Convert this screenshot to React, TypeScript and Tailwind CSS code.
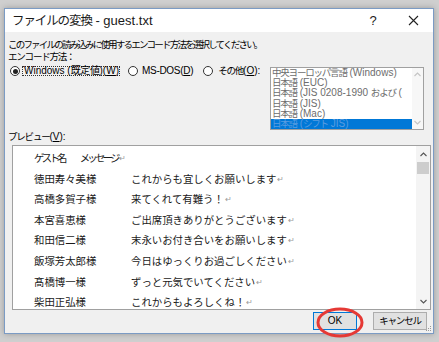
import type { ReactNode } from 'react';

const encodings = [
  '中央ヨーロッパ言語 (Windows)',
  '日本語 (EUC)',
  '日本語 (JIS 0208-1990 および (',
  '日本語 (JIS)',
  '日本語 (Mac)',
  '日本語 (シフト JIS)',
];

const guests = [
  { name: '徳田寿々美様', message: 'これからも宜しくお願いします' },
  { name: '高橋多賀子様', message: '来てくれて有難う！' },
  { name: '本宮喜恵様', message: 'ご出席頂きありがとうございます' },
  { name: '和田信二様', message: '末永いお付き合いをお願いします' },
  { name: '飯塚芳太郎様', message: '今日はゆっくりお過ごしください' },
  { name: '髙橋博一様', message: 'ずっと元気でいてください' },
  { name: '柴田正弘様', message: 'これからもよろしくね！' },
];

// Japanese runs are set a bit tighter so they take the width of the UI font
function Jp({ text, cjk = 'text-[9.5px] tracking-[-1.2px]' }: { text: string; cjk?: string }) {
  const parts = text.split(/([\u3000-\u30ff\u4e00-\u9fff\uff01-\uff60]+)/);
  return (
    <>
      {parts.map((p, i) =>
        i % 2 ? (
          <span key={i} className={cjk}>
            {p}
          </span>
        ) : (
          p
        )
      )}
    </>
  );
}

function Chevron({ up, color = '#444' }: { up?: boolean; color?: string }) {
  return (
    <svg width="7" height="5" viewBox="0 0 7 5">
      <polyline
        points={up ? '0.5,4 3.5,1 6.5,4' : '0.5,1 3.5,4 6.5,1'}
        fill="none"
        stroke={color}
        strokeWidth="1.1"
      />
    </svg>
  );
}

function Radio({ checked, children }: { checked?: boolean; children: ReactNode }) {
  return (
    <div className="flex items-center shrink-0">
      <div className="w-[10px] h-[10px] rounded-full border border-[#333] bg-white flex items-center justify-center shrink-0">
        {checked && <div className="w-[5px] h-[5px] rounded-full bg-[#222]" />}
      </div>
      {children}
    </div>
  );
}

function ReturnMark() {
  return <span className="text-[#9a9a9a] text-[8px] tracking-normal ml-[1px] align-top">↵</span>;
}

export default function App() {
  return (
    <div className="w-[439px] h-[342px] bg-[#cfcfcf] pt-[8px] pl-[4px] text-black text-[10px] font-['Liberation_Sans','Noto_Sans_CJK_JP',sans-serif]">
      <div className="relative w-[430px] h-[326px] border border-[#7b9bc4] flex flex-col shadow-[0_0_6px_rgba(0,0,0,0.25)]">
        {/* title bar */}
        <div className="h-[23px] bg-white flex items-center pl-[7px]">
          <span className="text-[13px] leading-none text-[#1a1a1a] whitespace-nowrap">
            <Jp text="ファイルの変換 - guest.txt" cjk="text-[12.5px] tracking-[-1.1px]" />
          </span>
          <div className="ml-auto flex">
            <div className="w-[40px] flex justify-center text-[13px] leading-none text-[#222]">?</div>
            <div className="w-[40px] flex justify-center items-center">
              <svg width="11" height="11" viewBox="0 0 11 11">
                <path d="M1 1L10 10M10 1L1 10" stroke="#222" strokeWidth="1.1" />
              </svg>
            </div>
          </div>
        </div>

        {/* body */}
        <div className="flex-1 bg-[#f0f0f0] flex flex-col pl-[3px]">
          <div className="mt-[7px] leading-[12px] whitespace-nowrap">
            <Jp
              text="このファイルの読み込みに使用するエンコード方法を選択してください。"
              cjk="text-[9.5px] tracking-[-1.8px]"
            />
          </div>
          <div className="leading-[12px]">
            <Jp text="エンコード方法：" />
          </div>

          <div className="mt-[2px] flex items-start">
            <div className="h-[12px] flex items-center ml-[2px]">
              <Radio checked>
                <div className="ml-[2px] w-[98px] h-[10px] border border-dotted border-[#333] flex items-center px-[1px] leading-none whitespace-nowrap">
                  Windows (<Jp text="既定値" cjk="text-[10px] tracking-[-0.4px]" />)(<u>W</u>)
                </div>
              </Radio>
              <div className="ml-[8px]">
                <Radio>
                  <span className="ml-[4px] leading-none whitespace-nowrap tracking-[-0.3px]">
                    MS-DOS(<u>D</u>)
                  </span>
                </Radio>
              </div>
              <div className="ml-[10px]">
                <Radio>
                  <span className="ml-[5px] leading-none whitespace-nowrap">
                    <Jp text="その他" />(<u>O</u>):
                  </span>
                </Radio>
              </div>
            </div>

            {/* encoding list */}
            <div className="ml-auto mr-[9px] mt-[2px] shrink-0 w-[154px] h-[63px] border border-[#a0a0a0] bg-white flex">
              <div className="flex-1 overflow-hidden leading-[10.2px] text-[#6d6d6d]">
                {encodings.map((e, i) => (
                  <div
                    key={e}
                    className={
                      i === encodings.length - 1
                        ? 'bg-[#0078d7] text-[#5a9ce0] whitespace-nowrap h-[10.2px] pl-[1px]'
                        : 'whitespace-nowrap h-[10.2px] pl-[1px]'
                    }
                  >
                    <Jp text={e} />
                  </div>
                ))}
              </div>
              <div className="w-[11px] bg-[#f7f7f7] flex flex-col items-center justify-between py-[4px]">
                <Chevron up color="#c4c4c4" />
                <Chevron color="#c4c4c4" />
              </div>
            </div>
          </div>

          <div className="mt-[1px] leading-[12px]">
            <Jp text="プレビュー" />(<u>V</u>):
          </div>

          {/* preview */}
          <div className="mt-[2px] ml-[4px] w-[419px] h-[165px] border border-[#a0a0a0] bg-white flex">
            <div className="flex-1 overflow-hidden pt-[2px] pl-[21px] text-[10.4px] leading-[20.6px] text-[#1a1a1a] font-['Noto_Sans_CJK_JP',sans-serif]">
              <div className="whitespace-nowrap">
                <span className="tracking-[-2.7px]">ゲスト名</span>
                <span className="ml-[15px] tracking-[-2.8px]">メッセージ</span>
                <ReturnMark />
              </div>
              {guests.map((g) => (
                <div key={g.name} className="flex whitespace-nowrap">
                  <span className="w-[97px]">{g.name}</span>
                  <span>
                    {g.message}
                    <ReturnMark />
                  </span>
                </div>
              ))}
            </div>
            <div className="w-[14px] bg-[#f4f4f4] flex flex-col items-center">
              <div className="h-[16px] flex items-center">
                <Chevron up color="#555" />
              </div>
              <div className="w-[12px] h-[12px] bg-[#cdcdcd]" />
              <div className="mt-auto h-[16px] flex items-center">
                <Chevron color="#555" />
              </div>
            </div>
          </div>

          {/* buttons */}
          <div className="mt-[2px] flex justify-end mr-[6px] gap-[16px]">
            <div className="relative">
              <div className="w-[44px] h-[18px] border border-[#0078d7] bg-[#e1e1e1] flex items-center justify-center leading-none">
                OK
              </div>
              <svg
                className="absolute left-[3px] top-[-5px]"
                width="48"
                height="31"
                viewBox="0 0 48 31"
              >
                <ellipse cx="24" cy="15.5" rx="22" ry="13.5" fill="none" stroke="#e53935" strokeWidth="3" />
              </svg>
            </div>
            <div className="w-[54px] h-[18px] border border-[#adadad] bg-[#e1e1e1] flex items-center justify-center leading-none">
              <Jp text="キャンセル" />
            </div>
          </div>
        </div>

        {/* resize grip */}
        <svg className="absolute right-[1px] bottom-[1px]" width="7" height="7" viewBox="0 0 7 7">
          <rect x="5" y="1" width="1" height="1" fill="#999" />
          <rect x="3" y="3" width="1" height="1" fill="#999" />
          <rect x="5" y="3" width="1" height="1" fill="#999" />
          <rect x="1" y="5" width="1" height="1" fill="#999" />
          <rect x="3" y="5" width="1" height="1" fill="#999" />
          <rect x="5" y="5" width="1" height="1" fill="#999" />
        </svg>
      </div>
    </div>
  );
}
